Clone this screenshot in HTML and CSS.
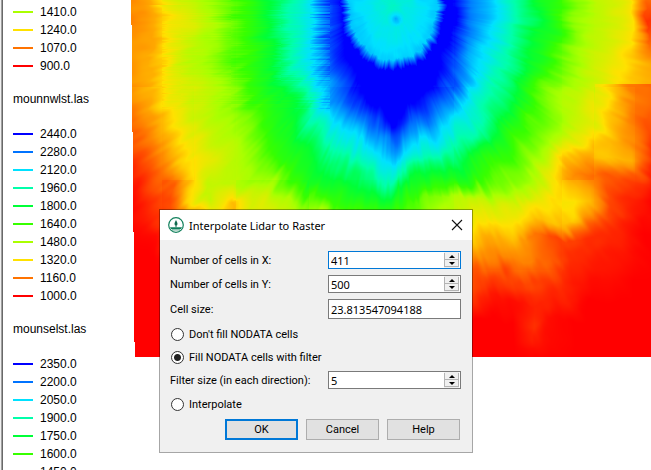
FILE: index.html
```html
<!DOCTYPE html>
<html lang="en">
<head>
<meta charset="utf-8">
<title>Interpolate Lidar to Raster</title>
<link rel="stylesheet" href="styles.css">
</head>
<body>
<div class="workspace">
  <aside class="legend">
    <ul class="classes">
      <li><i class="line c3"></i>1410.0</li>
      <li><i class="line c2"></i>1240.0</li>
      <li><i class="line c1"></i>1070.0</li>
      <li><i class="line c0"></i>900.0</li>
    </ul>
    <h2 class="layer">mounnwlst.las</h2>
    <ul class="classes">
      <li><i class="line c9"></i>2440.0</li>
      <li><i class="line c8"></i>2280.0</li>
      <li><i class="line c7"></i>2120.0</li>
      <li><i class="line c6"></i>1960.0</li>
      <li><i class="line c5"></i>1800.0</li>
      <li><i class="line c4"></i>1640.0</li>
      <li><i class="line c3"></i>1480.0</li>
      <li><i class="line c2"></i>1320.0</li>
      <li><i class="line c1"></i>1160.0</li>
      <li><i class="line c0"></i>1000.0</li>
    </ul>
    <h2 class="layer">mounselst.las</h2>
    <ul class="classes">
      <li><i class="line c9"></i>2350.0</li>
      <li><i class="line c8"></i>2200.0</li>
      <li><i class="line c7"></i>2050.0</li>
      <li><i class="line c6"></i>1900.0</li>
      <li><i class="line c5"></i>1750.0</li>
      <li><i class="line c4"></i>1600.0</li>
      <li><i class="line c3"></i>1450.0</li>
    </ul>
  </aside>
  <main class="map"><canvas id="terrain" height="357"></canvas></main>
</div>

<form class="dialog" role="dialog" aria-labelledby="dialog-title">
  <header class="titlebar">
    <svg class="logo" viewBox="0 0 16 16" aria-hidden="true">
      <circle cx="8" cy="8" r="7.3" fill="#fff" stroke="#12805c" stroke-width="1.2"/>
      <path d="M2 10.2H14A6.4 6.4 0 0 1 12.9 12H3.1A6.4 6.4 0 0 1 2 10.2Z" fill="#12805c"/>
      <path d="M4 12.9H12" stroke="#12805c" stroke-width=".8"/>
      <path d="M8 3C8.6 4.5 9.5 5.6 9.5 7A1.5 1.5 0 0 1 6.5 7C6.5 5.6 7.4 4.5 8 3Z" fill="#12694e"/>
      <path d="M8 8V10.2" stroke="#12694e" stroke-width="1"/>
    </svg>
    <h1 class="title" id="dialog-title">Interpolate Lidar to Raster</h1>
    <button class="close" type="button" aria-label="Close">
      <svg viewBox="0 0 12 12"><path d="M1 1L11 11M11 1L1 11" stroke="#111" stroke-width="1.1"/></svg>
    </button>
  </header>
  <div class="content">
    <div class="row">
      <label for="cells-x">Number of cells in X:</label>
      <div class="spin active">
        <input id="cells-x" type="number" value="411">
        <span class="steps"><button type="button" class="step up" aria-label="More"></button><button type="button" class="step down" aria-label="Less"></button></span>
      </div>
    </div>
    <div class="row">
      <label for="cells-y">Number of cells in Y:</label>
      <div class="spin">
        <input id="cells-y" type="number" value="500">
        <span class="steps"><button type="button" class="step up" aria-label="More"></button><button type="button" class="step down" aria-label="Less"></button></span>
      </div>
    </div>
    <div class="row">
      <label for="cell-size">Cell size:</label>
      <input class="field" id="cell-size" type="text" value="23.813547094188">
    </div>
    <label class="choice"><input type="radio" name="fill">Don't fill NODATA cells</label>
    <label class="choice"><input type="radio" name="fill" checked>Fill NODATA cells with filter</label>
    <div class="row">
      <label for="filter-size">Filter size (in each direction):</label>
      <div class="spin">
        <input id="filter-size" type="number" value="5">
        <span class="steps"><button type="button" class="step up" aria-label="More"></button><button type="button" class="step down" aria-label="Less"></button></span>
      </div>
    </div>
    <label class="choice"><input type="radio" name="fill">Interpolate</label>
    <div class="actions">
      <button class="btn default" type="button">OK</button>
      <button class="btn" type="button">Cancel</button>
      <button class="btn" type="button">Help</button>
    </div>
  </div>
</form>
<script src="terrain.js"></script>
</body>
</html>
```
FILE: styles.css
```css
* { box-sizing: border-box; }

body {
  margin: 0;
  height: 100vh;
  overflow: hidden;
  background: #fff;
  color: #000;
  font-family: Roboto, sans-serif;
  font-size: 11px;
}

.workspace {
  display: flex;
  height: 100%;
}

/* Legend */
.legend {
  flex: none;
  width: 131px;
  padding: 3px 0 0 13px;
  overflow: hidden;
  background: linear-gradient(to right, #f0f0f0 0 1px, #a0a0a0 1px 2px, #696969 2px 3px, #fff 3px);
  font: 12px/18px "Liberation Sans", Arial, sans-serif;
}
.classes {
  margin: 0;
  padding: 0;
  list-style: none;
}
.classes li {
  display: flex;
  align-items: center;
  gap: 7px;
}
.line {
  width: 20px;
  height: 2px;
}
.layer {
  margin: 15px 0 17px;
  font: inherit;
}
.c9 { background: #0000ff; }
.c8 { background: #0073ff; }
.c7 { background: #00e1ff; }
.c6 { background: #00ffaa; }
.c5 { background: #00ff37; }
.c4 { background: #37ff00; }
.c3 { background: #aaff00; }
.c2 { background: #ffe100; }
.c1 { background: #ff7300; }
.c0 { background: #ff0000; }

.map {
  flex: 1;
  min-width: 0;
}
.map canvas { display: block; }

/* Dialog */
.dialog {
  position: absolute;
  left: 159px;
  top: 209px;
  width: 314px;
  border: 1px solid rgba(0, 0, 0, 0.35);
  background: #f0f0f0;
  background-clip: padding-box;
}
.titlebar {
  display: flex;
  align-items: center;
  gap: 5px;
  height: 30px;
  padding: 0 9px 0 8px;
  background: #fff;
}
.logo {
  width: 16px;
  height: 16px;
}
.title {
  flex: 1;
  margin: 0;
  font: 400 11px "Noto Sans", sans-serif;
}
.close {
  width: 12px;
  height: 12px;
  padding: 0;
  border: 0;
  background: none;
}
.close svg { display: block; }

.content {
  display: flex;
  flex-direction: column;
  gap: 6px;
  padding: 11px 11px 12px 10px;
}
.row {
  display: flex;
  align-items: center;
  justify-content: space-between;
  line-height: 18px;
}
.row label,
.choice {
  padding-top: 1px;
}
.row label { line-height: 17px; }
.spin,
.field {
  width: 133px;
  border: 1px solid #7a7a7a;
  background: #fff;
}
.spin {
  display: flex;
  height: 18px;
  padding-right: 1px;
}
.spin.active { border-color: #0078d7; }
input {
  margin: 0;
  color: #000;
  font: 11px "Noto Sans", sans-serif;
}
.spin input {
  flex: 1;
  min-width: 0;
  height: 16px;
  padding: 0 2px;
  border: 0;
  outline: 0;
  background: none;
  appearance: textfield;
}
.spin input::-webkit-inner-spin-button { appearance: none; }
.field {
  height: 20px;
  padding: 0 2px;
}
.steps {
  display: flex;
  flex-direction: column;
  width: 15px;
  padding: 1px 0;
  background: #f0f0f0;
}
.step {
  display: flex;
  flex: 1;
  align-items: center;
  justify-content: center;
  min-height: 0;
  padding: 0;
  border: 1px solid #b4b4b4;
  border-top: 0;
  background: #f0f0f0;
}
.step::before {
  content: "";
  border: 3px solid transparent;
}
.up::before {
  border-top: 0;
  border-bottom-color: #000;
}
.down::before {
  border-bottom: 0;
  border-top-color: #000;
}

.choice {
  display: flex;
  align-items: center;
  gap: 5px;
  height: 17px;
  padding-left: 1px;
}
.choice input {
  width: 13px;
  height: 13px;
  border: 1px solid #333;
  border-radius: 50%;
  background: #fff;
  appearance: none;
}
.choice input:checked {
  background: radial-gradient(circle, #222 3px, #fff 4px);
}

.actions {
  display: flex;
  justify-content: flex-end;
  gap: 8px;
  padding: 1px 1px 0 0;
}
.btn {
  width: 73px;
  height: 21px;
  padding: 0;
  border: 1px solid #adadad;
  background: #e1e1e1;
  color: #000;
  font: inherit;
}
.btn.default { border: 2px solid #0078d7; }
```
FILE: terrain.js
```javascript
// Elevation samples every 20px, in tenths of a colour class.
const GRID = [
  [13,15,22,27,31,36,43,51,60,69,86,94,95,95,95,94,92,79,71,62,52,44,34,28,27,22,10],
  [12,15,21,23,28,35,43,52,62,70,86,94,95,95,95,95,93,80,72,62,53,44,34,29,26,21,4],
  [14,15,22,28,31,36,43,51,61,70,84,93,95,95,95,95,92,78,70,60,50,43,33,29,25,21,8],
  [13,15,24,29,32,37,43,49,60,70,83,92,95,95,95,95,86,74,66,56,46,39,33,27,23,18,14],
  [14,16,22,26,29,34,42,47,56,69,78,88,95,95,95,92,84,72,60,54,44,36,31,26,21,18,16],
  [12,14,21,25,29,33,40,45,52,64,77,84,91,95,90,86,79,67,58,50,40,33,29,23,16,11,9],
  [9,13,19,24,28,31,37,43,49,60,71,76,83,91,81,77,73,65,56,48,39,33,27,22,16,11,8],
  [7,11,17,22,27,29,34,40,45,55,64,69,74,79,71,67,65,60,50,43,36,31,24,18,16,12,6],
  [4,9,14,20,24,28,32,38,44,49,54,59,65,71,62,58,54,49,43,38,32,27,18,16,17,15,4],
  [3,7,11,19,28,28,30,33,40,46,48,51,55,63,51,48,46,42,36,33,29,21,14,11,8,5,2],
  [1,4,7,20,28,17,24,27,29,35,40,43,45,52,38,33,30,28,26,25,22,20,20,16,6,3,0],
  [0,3,6,14,20,17,20,22,25,28,30,32,35,36,33,30,27,24,21,21,18,17,17,11,6,3,1],
  [0,1,4,8,12,12,14,16,18,20,22,24,26,26,25,24,22,18,15,16,11,7,5,4,4,2,0],
  [0,0,2,4,6,8,10,12,14,16,18,20,20,20,20,18,16,13,12,12,12,8,4,3,2,1,0],
  [0,0,0,0,2,4,6,8,10,12,12,12,12,12,12,12,10,7,6,5,6,5,2,1,1,0,0],
  [0,0,0,0,0,0,0,0,0,0,0,0,0,0,0,0,5,4,2,1,3,3,2,0,0,0,0],
  [0,0,0,0,0,0,0,0,0,0,0,0,0,0,0,0,0,0,0,0,4,1,0,0,0,0,0],
  [0,0,0,0,0,0,0,0,0,0,0,0,0,0,0,0,0,0,0,0,1,1,0,0,0,0,0],
  [0,0,0,0,0,0,0,0,0,0,0,0,0,0,0,0,0,0,0,0,0,0,0,0,0,0,0]
];
const RAMP = [
  [255,0,0],[255,115,0],[255,225,0],[170,255,0],[55,255,0],
  [0,255,55],[0,255,170],[0,225,255],[0,115,255],[0,0,255]
];
const TILE_X = [0, 31, 63, 105, 178, 199, 268, 323, 431, 463, 504];
const TILE_Y = [0, 87, 180, 270];

const clamp = (v, lo, hi) => Math.max(lo, Math.min(hi, v));
const smooth = t => t * t * (3 - 2 * t);

function hash(x, y) {
  const n = Math.sin(x * 127.1 + y * 311.7) * 43758.5453;
  return n - Math.floor(n);
}

function noise(x, y) {
  const ix = Math.floor(x), iy = Math.floor(y);
  const fx = smooth(x - ix), fy = smooth(y - iy);
  const a = hash(ix, iy) * (1 - fx) + hash(ix + 1, iy) * fx;
  const b = hash(ix, iy + 1) * (1 - fx) + hash(ix + 1, iy + 1) * fx;
  return (a * (1 - fy) + b * fy) * 2 - 1;
}

function sample(x, y, cliff) {
  const gx = clamp(x / 20, 0, 25.999), gy = clamp(y / 20, 0, 17.999);
  const ix = Math.floor(gx), iy = Math.floor(gy);
  const fx = gx - ix;
  let fy = gy - iy;
  if (cliff && iy === 4) fy = cliff > 0 ? 1 : 0;
  const top = GRID[iy][ix] * (1 - fx) + GRID[iy][ix + 1] * fx;
  const bottom = GRID[iy + 1][ix] * (1 - fx) + GRID[iy + 1][ix + 1] * fx;
  return (top * (1 - fy) + bottom * fy) / 10;
}

function elevation(x, y) {
  // Gullies run outward from the summit.
  const dx = x - 262, dy = y - 5;
  const r = Math.hypot(dx, dy), a = Math.atan2(dy, dx);
  let push = noise(a * 11, r / 45) * 5 + noise(a * 30 + 50, r / 28) * 3 + noise(a * 70, r / 18 + 9) * 2;
  push *= clamp(r / 130, 0.3, 1.4);
  // Scan lines are visible on the western flank.
  if (x > 30 && x < 199 && y < 110) push += (hash(Math.floor(y), Math.floor(x / 50)) - 0.5) * (x > 178 ? 10 : 5);
  const sx = x + dx / (r + 1) * push + noise(x / 17, y / 17) * 3;
  const sy = y + dy / (r + 1) * push + noise(x / 15 + 40, y / 19) * 3;
  const cliff = x > 463 ? (y < 84 ? -1 : 1) : 0;
  let v = sample(sx, sy, cliff);
  // Small offsets between survey tiles.
  const tx = TILE_X.filter(t => t <= x).length, ty = TILE_Y.filter(t => t <= y).length;
  v += (hash(tx * 3, ty * 7) - 0.5) * 0.2 * clamp(v - 0.3, 0, 1);
  // Crater floor.
  const e = Math.hypot(dx / 52, dy / 65) + noise(a * 14, r / 30) * 0.05 + noise(a * 40, r / 12) * 0.03;
  if (e < 1) {
    v = e > 0.84 ? 7.2 + (e - 0.84) / 0.16 * 1.8 : 6.4 + e * 0.95 + noise(x / 7, y / 7) * 0.1;
    v += clamp(1 - Math.hypot(x - 264, y - 18) / 9, 0, 1) * 0.9;
  }
  return v + noise(x / 12, y / 9) * 0.06 * clamp(v * 2, 0, 1);
}

function draw() {
  const canvas = document.getElementById("terrain");
  canvas.width = canvas.parentElement.clientWidth;
  const ctx = canvas.getContext("2d");
  const image = ctx.createImageData(canvas.width, canvas.height);
  for (let y = 0; y < canvas.height; y++) {
    const edge = [25, 132, 232, 342].filter(limit => y >= limit).length;
    for (let x = edge; x < canvas.width; x++) {
      const v = clamp(elevation(x, y), 0, 9);
      const i = Math.min(8, Math.floor(v)), f = v - i;
      const p = (y * canvas.width + x) * 4;
      for (let c = 0; c < 3; c++) image.data[p + c] = RAMP[i][c] * (1 - f) + RAMP[i + 1][c] * f;
      image.data[p + 3] = 255;
    }
  }
  ctx.putImageData(image, 0, 0);
}

draw();
window.addEventListener("resize", draw);
```
